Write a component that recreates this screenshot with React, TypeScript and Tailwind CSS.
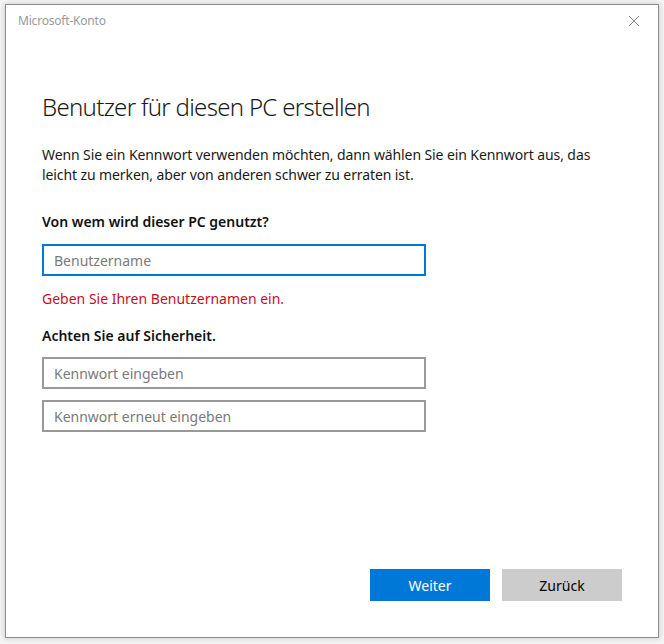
import React from "react";

export default function App() {
  const font = { fontFamily: '"Noto Sans", "Open Sans", sans-serif' };
  return (
    <div className="w-[664px] h-[644px] bg-[#f4f4f4] pt-[4px] pl-[5px]" style={font}>
      <div className="w-[654px] h-[634px] bg-white border border-[#8c8c8c] shadow-[0_0_6px_rgba(0,0,0,0.18)] flex flex-col">
        <div className="h-[30px] flex items-center justify-between pl-[12px] pr-[18px]">
          <span className="text-[12px] tracking-[-0.2px] text-[#9a9a9a] mt-[1px]">Microsoft-Konto</span>
          <svg width="12" height="12" viewBox="0 0 12 12" className="mt-[2px]">
            <path d="M1 1 L11 11 M11 1 L1 11" stroke="#8a8a8a" strokeWidth="1" />
          </svg>
        </div>
        <div className="flex flex-col pl-[36px] pr-[36px]">
          <h1 className="text-[24px] font-light tracking-[-0.7px] text-[#1a1a1a] leading-[32px] mt-[56px]">
            Benutzer für diesen PC erstellen
          </h1>
          <p className="text-[14px] text-[#1a1a1a] leading-[20px] mt-[22px] w-[560px] tracking-[-0.1px]">
            Wenn Sie ein Kennwort verwenden möchten, dann wählen Sie ein Kennwort aus, das leicht zu merken, aber von anderen schwer zu erraten ist.
          </p>
          <div className="text-[14px] font-semibold text-[#111] leading-[20px] mt-[27px]">
            Von wem wird dieser PC genutzt?
          </div>
          <div className="mt-[12px] w-[384px] h-[32px] border-2 border-[#0078d7] flex items-center pl-[10px] text-[14px] text-[#7a7a7a]">
            Benutzername
          </div>
          <div className="text-[14px] text-[#c50f1f] leading-[20px] mt-[13px]">
            Geben Sie Ihren Benutzernamen ein.
          </div>
          <div className="text-[14px] font-semibold text-[#111] leading-[20px] mt-[17px]">
            Achten Sie auf Sicherheit.
          </div>
          <div className="mt-[11px] w-[384px] h-[32px] border-2 border-[#999999] flex items-center pl-[10px] text-[14px] text-[#7a7a7a]">
            Kennwort eingeben
          </div>
          <div className="mt-[11px] w-[384px] h-[32px] border-2 border-[#999999] flex items-center pl-[10px] text-[14px] text-[#7a7a7a]">
            Kennwort erneut eingeben
          </div>
        </div>
        <div className="flex-1" />
        <div className="flex justify-end gap-[12px] pr-[36px] pb-[36px]">
          <div className="w-[120px] h-[32px] bg-[#0078d7] text-white text-[14px] flex items-center justify-center">Weiter</div>
          <div className="w-[120px] h-[32px] bg-[#cccccc] text-black text-[14px] flex items-center justify-center">Zurück</div>
        </div>
      </div>
    </div>
  );
}
